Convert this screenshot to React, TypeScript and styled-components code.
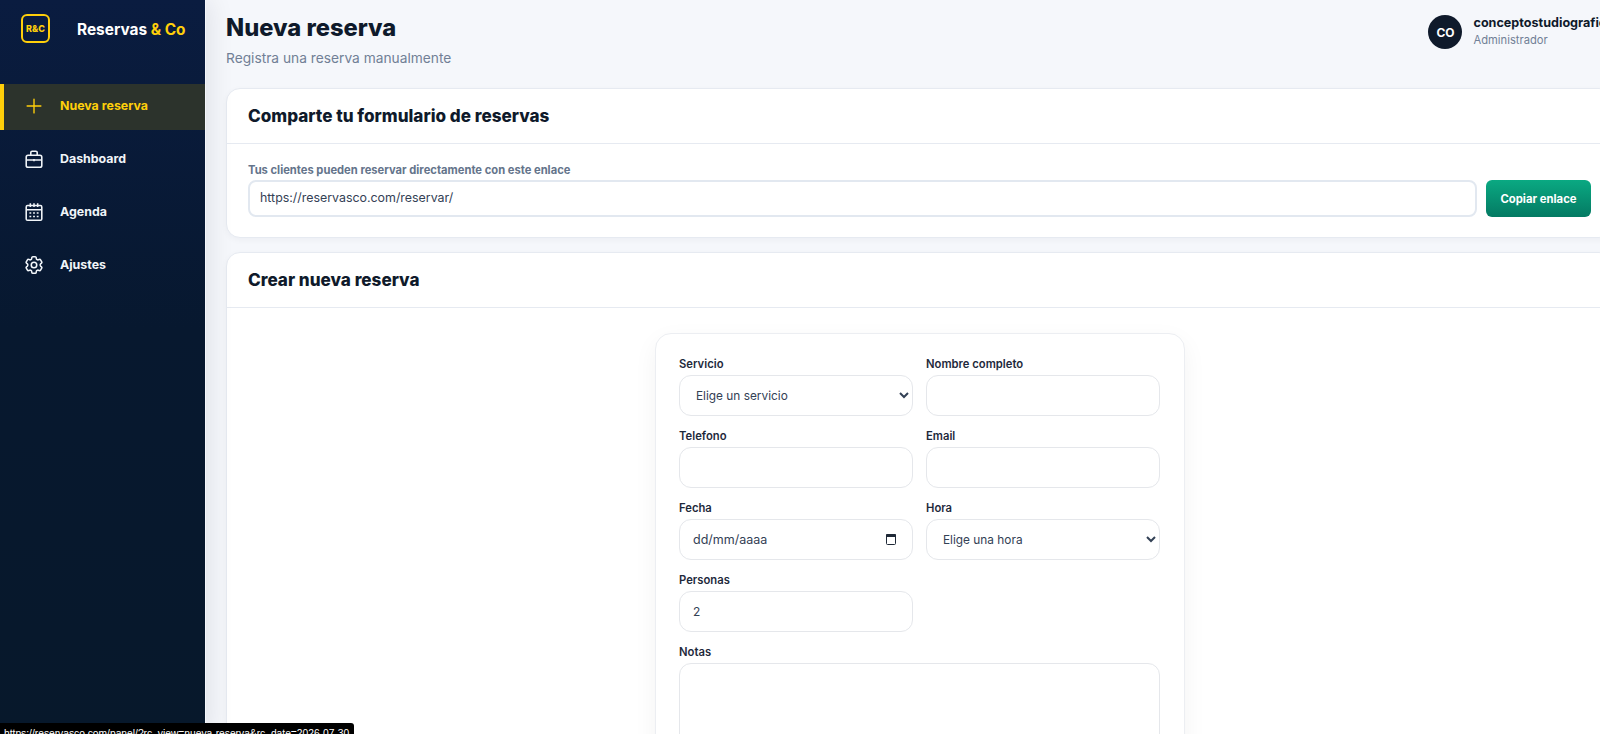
import React from 'react';
import styled, { createGlobalStyle } from 'styled-components';
import { HiOutlineCog6Tooth, HiOutlinePlus } from 'react-icons/hi2';

const GlobalStyle = createGlobalStyle`
  html, body {
    margin: 0;
    height: 100%;
    overflow: hidden;
    background: #f5f7fb;
    font-family: Inter, "Liberation Sans", sans-serif;
    color: #0f1a2b;
  }
  * { box-sizing: border-box; }
`;

function BriefcaseIcon() {
  return (
    <svg width="22" height="22" viewBox="0 0 24 24" fill="none" stroke="currentColor" strokeWidth="1.7" strokeLinejoin="round">
      <rect x="3.5" y="8" width="17" height="13" rx="2" />
      <path d="M8.5 8V5A1.5 1.5 0 0 1 10 3.5h4A1.5 1.5 0 0 1 15.5 5v3" />
      <path d="M3.5 13h17M12 12v2.5" />
    </svg>
  );
}

function CalendarIcon() {
  return (
    <svg width="22" height="22" viewBox="0 0 24 24" fill="none" stroke="currentColor" strokeWidth="1.7">
      <rect x="3.5" y="5" width="17" height="16" rx="1.5" />
      <path d="M3.5 9.5h17M8 2.5v4M12 2.5v4M16 2.5v4" />
      <path d="M7 13h2M11 13h2M15 13h2M7 17h2M11 17h2M15 17h2" strokeWidth="1.6" />
    </svg>
  );
}

function PlusIcon() {
  return <HiOutlinePlus size={22} />;
}

function GearIcon() {
  return <HiOutlineCog6Tooth size={22} strokeWidth={1.7} />;
}

const navItems = [
  { label: 'Nueva reserva', icon: PlusIcon, active: true },
  { label: 'Dashboard', icon: BriefcaseIcon, active: false },
  { label: 'Agenda', icon: CalendarIcon, active: false },
  { label: 'Ajustes', icon: GearIcon, active: false },
];

export default function App() {
  return (
    <Shell>
      <GlobalStyle />
      <Sidebar>
        <Brand>
          <LogoBox>R&amp;C</LogoBox>
          <BrandName>
            Reservas <BrandAccent>&amp; Co</BrandAccent>
          </BrandName>
        </Brand>
        <Nav>
          {navItems.map(({ label, icon: Icon, active }) => (
            <NavItem key={label} $active={active}>
              <Icon />
              <NavLabel>{label}</NavLabel>
            </NavItem>
          ))}
        </Nav>
      </Sidebar>

      <Main>
        <TopBar>
          <div>
            <PageTitle>Nueva reserva</PageTitle>
            <PageSubtitle>Registra una reserva manualmente</PageSubtitle>
          </div>
          <UserBlock>
            <Avatar>CO</Avatar>
            <div>
              <UserName>conceptostudiografico</UserName>
              <UserRole>Administrador</UserRole>
            </div>
          </UserBlock>
        </TopBar>

        <ShareCard>
          <CardHeader>
            <CardTitle>Comparte tu formulario de reservas</CardTitle>
          </CardHeader>
          <ShareBody>
            <ShareLabel>Tus clientes pueden reservar directamente con este enlace</ShareLabel>
            <ShareRow>
              <ShareInput readOnly value="https://reservasco.com/reservar/" />
              <CopyButton>Copiar enlace</CopyButton>
            </ShareRow>
          </ShareBody>
        </ShareCard>

        <CreateCard>
          <CardHeader>
            <CardTitle>Crear nueva reserva</CardTitle>
          </CardHeader>
          <CreateBody>
            <FormCard>
              <Field>
                <FieldLabel>Servicio</FieldLabel>
                <Select defaultValue="">
                  <option value="">Elige un servicio</option>
                </Select>
              </Field>
              <Field>
                <FieldLabel>Nombre completo</FieldLabel>
                <Input type="text" />
              </Field>
              <Field>
                <FieldLabel>Telefono</FieldLabel>
                <Input type="text" />
              </Field>
              <Field>
                <FieldLabel>Email</FieldLabel>
                <Input type="text" />
              </Field>
              <Field>
                <FieldLabel>Fecha</FieldLabel>
                <DateBox>
                  dd/mm/aaaa
                  <svg width="10" height="11" viewBox="0 0 10 11" fill="none">
                    <rect x="0.5" y="0.5" width="9" height="10" rx="1" stroke="#1f2937" />
                    <rect x="0" y="0" width="10" height="3" rx="1" fill="#1f2937" />
                  </svg>
                </DateBox>
              </Field>
              <Field>
                <FieldLabel>Hora</FieldLabel>
                <Select defaultValue="">
                  <option value="">Elige una hora</option>
                </Select>
              </Field>
              <Field>
                <FieldLabel>Personas</FieldLabel>
                <Input type="text" defaultValue="2" />
              </Field>
              <WideField>
                <FieldLabel>Notas</FieldLabel>
                <Notes />
              </WideField>
            </FormCard>
          </CreateBody>
        </CreateCard>
      </Main>

      <StatusLink>https://reservasco.com/panel/?rc_view=nueva-reserva&amp;rc_date=2026-07-30</StatusLink>
    </Shell>
  );
}

const Shell = styled.div`
  display: flex;
  width: 1634px;
  height: 734px;
  overflow: hidden;
`;

const Sidebar = styled.aside`
  flex: 0 0 206px;
  background: linear-gradient(180deg, #0a1c40 0%, #07182f 45%, #07182b 100%);
  border-right: 1px solid #f5f7fb;
  box-shadow: 4px 0 24px rgba(15, 26, 43, 0.09);
  position: relative;
  z-index: 1;
`;

const Brand = styled.div`
  display: flex;
  align-items: center;
  height: 84px;
  padding: 0 0 27px 21px;
`;

const LogoBox = styled.div`
  width: 29px;
  height: 29px;
  border: 2px solid #ffcf0a;
  border-radius: 6px;
  display: flex;
  align-items: center;
  justify-content: center;
  color: #ffcf0a;
  font-size: 9px;
  font-weight: 800;
`;

const BrandName = styled.div`
  margin: 2px 0 0 27px;
  color: #ffffff;
  font-size: 15.4px;
  font-weight: 700;
  white-space: nowrap;
`;

const BrandAccent = styled.span`
  color: #ffcf0a;
`;

const Nav = styled.nav`
  display: flex;
  flex-direction: column;
  gap: 7px;
`;

const NavItem = styled.a<{ $active: boolean }>`
  display: flex;
  align-items: center;
  gap: 15px;
  height: 46px;
  padding-left: ${({ $active }) => ($active ? '19px' : '23px')};
  padding-bottom: 2px;
  border-left: ${({ $active }) => ($active ? '4px solid #ffcf0a' : 'none')};
  background: ${({ $active }) => ($active ? '#2c332c' : 'transparent')};
  color: ${({ $active }) => ($active ? '#ffcf0a' : '#f1f5f9')};
`;

const NavLabel = styled.span`
  margin-top: -1px;
  font-size: 12.4px;
  font-weight: 700;
`;

const Main = styled.main`
  flex: 1;
  min-width: 0;
  padding: 0 21px 0 20px;
`;

const TopBar = styled.header`
  display: flex;
  justify-content: space-between;
  height: 88px;
  padding-top: 13px;
`;

const PageTitle = styled.h1`
  margin: 0;
  font-size: 23.7px;
  line-height: 30px;
  font-weight: 800;
`;

const PageSubtitle = styled.p`
  margin: 7px 0 0;
  font-size: 13.75px;
  line-height: 17px;
  color: #718096;
`;

const UserBlock = styled.div`
  display: flex;
  gap: 11px;
  margin: 2px -1px 0 0;
`;

const Avatar = styled.div`
  width: 34px;
  height: 34px;
  border-radius: 50%;
  background: #0f1a2b;
  color: #ffffff;
  display: flex;
  align-items: center;
  justify-content: center;
  font-size: 12px;
  font-weight: 700;
`;

const UserName = styled.div`
  font-size: 12.6px;
  line-height: 16px;
  font-weight: 700;
`;

const UserRole = styled.div`
  margin-top: 2px;
  font-size: 11.2px;
  line-height: 14px;
  color: #718096;
`;

const Card = styled.section`
  background: #ffffff;
  border: 1px solid #e6eaf1;
  border-radius: 14px;
  box-shadow: 0 2px 6px rgba(15, 26, 43, 0.04);
`;

const ShareCard = styled(Card)`
  height: 150px;
`;

const CreateCard = styled(Card)`
  margin-top: 14px;
`;

const CardHeader = styled.div`
  height: 55px;
  padding: 0 0 1px 21px;
  display: flex;
  align-items: center;
  border-bottom: 1px solid #e6eaf1;
`;

const CardTitle = styled.h2`
  margin: 0;
  font-size: 17.1px;
  font-weight: 800;
`;

const ShareBody = styled.div`
  padding: 19px 21px 0;
`;

const ShareLabel = styled.div`
  font-size: 11.2px;
  line-height: 14px;
  font-weight: 700;
  color: #64748b;
`;

const ShareRow = styled.div`
  display: flex;
  gap: 9px;
  margin-top: 3px;
`;

const ShareInput = styled.input`
  flex: 1;
  height: 37px;
  padding: 0 0 2px 10px;
  border: 2px solid #e2e8f0;
  border-radius: 8px;
  font: 400 12.4px Inter, sans-serif;
  color: #334155;
  outline: none;
`;

const CopyButton = styled.button`
  width: 105px;
  height: 37px;
  border: none;
  border-radius: 6px;
  background: linear-gradient(180deg, #0aa982 0%, #047a63 100%);
  color: #ffffff;
  font: 700 11.3px Inter, sans-serif;
`;

const CreateBody = styled.div`
  display: flex;
  justify-content: center;
  padding-top: 25px;
`;

const FormCard = styled.div`
  width: 530px;
  display: grid;
  grid-template-columns: 234px 234px;
  justify-content: center;
  column-gap: 13px;
  row-gap: 14px;
  align-content: start;
  padding: 24px 0;
  background: #ffffff;
  border: 1px solid #eceef2;
  border-radius: 16px;
  box-shadow: 0 8px 24px rgba(15, 26, 43, 0.05);
`;

const Field = styled.label`
  display: flex;
  flex-direction: column;
  gap: 4px;
`;

const WideField = styled(Field)`
  grid-column: 1 / -1;
`;

const FieldLabel = styled.span`
  font-size: 11.25px;
  line-height: 13px;
  font-weight: 600;
  color: #1e293b;
`;

const Input = styled.input`
  width: 100%;
  height: 41px;
  padding: 0 13px;
  border: 1px solid #e5e7eb;
  border-radius: 12px;
  background: #ffffff;
  font: 400 12px Inter, sans-serif;
  color: #334155;
  outline: none;
`;

const Select = styled.select`
  width: 100%;
  height: 41px;
  padding: 0 12px;
  border: 1px solid #e5e7eb;
  border-radius: 12px;
  background: #ffffff;
  font: 400 11.85px Inter, sans-serif;
  color: #334155;
  outline: none;
`;

const DateBox = styled.div`
  display: flex;
  align-items: center;
  justify-content: space-between;
  height: 41px;
  padding: 0 16px 0 13px;
  border: 1px solid #e5e7eb;
  border-radius: 12px;
  font-size: 12.5px;
  color: #334155;
`;

const Notes = styled.textarea`
  width: 100%;
  height: 130px;
  border: 1px solid #e5e7eb;
  border-radius: 12px;
  outline: none;
  resize: none;
`;

const StatusLink = styled.div`
  position: fixed;
  left: 0;
  bottom: 0;
  z-index: 5;
  width: 354px;
  height: 11px;
  padding: 4px 0 0 4px;
  overflow: hidden;
  background: #000000;
  border-top-right-radius: 3px;
  color: #ffffff;
  font: 400 10.25px/13px "Liberation Sans", sans-serif;
  white-space: nowrap;
`;
